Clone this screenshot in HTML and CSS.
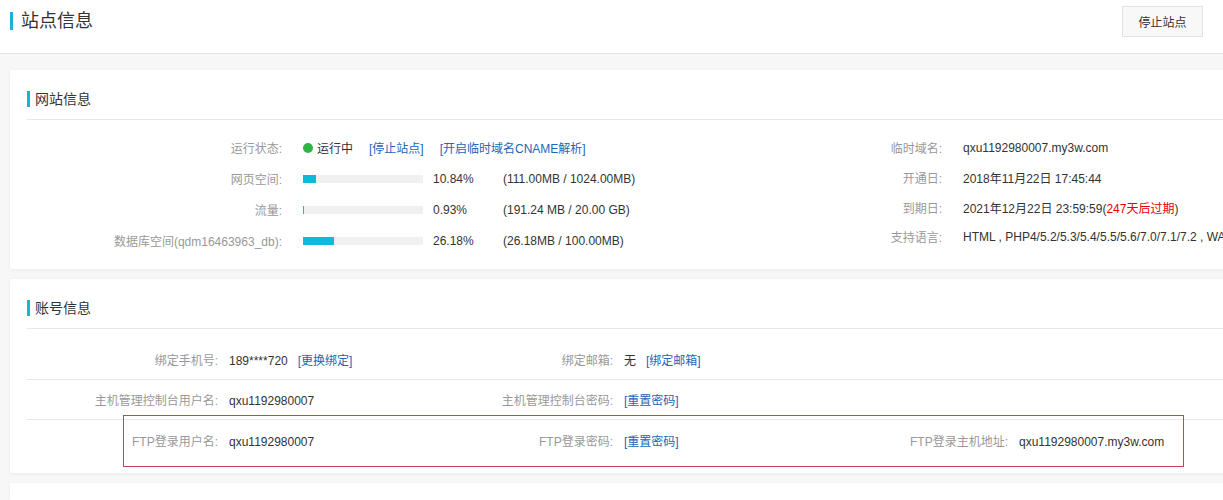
FILE: index.html
```html
<!DOCTYPE html>
<html lang="zh-CN">
<head>
  <meta charset="UTF-8" />
  <meta name="viewport" content="width=device-width, initial-scale=1.0"/>
  <title>站点信息</title>
  <link rel="stylesheet" href="styles.css">
</head>
<body>
  <div class="header">
    <h1 class="page-title">站点信息</h1>
    <button class="btn">停止站点</button>
  </div>

  <div class="content">
    <!-- 网站信息 -->
    <div class="card">
      <div class="card-title"><span>网站信息</span></div>
      <div class="site-info">
        <div class="info-left">
          <div class="row">
            <span class="label">运行状态:</span>
            <span class="value">
              <i class="dot"></i>运行中
              <a class="link gap">[停止站点]</a>
              <a class="link gap">[开启临时域名CNAME解析]</a>
            </span>
          </div>
          <div class="row">
            <span class="label">网页空间:</span>
            <span class="value">
              <span class="bar"><span class="fill" style="width: 10.84%"></span></span>
              <span class="pct">10.84%</span>
              <span>(111.00MB / 1024.00MB)</span>
            </span>
          </div>
          <div class="row">
            <span class="label">流量:</span>
            <span class="value">
              <span class="bar"><span class="fill" style="width: 0.93%"></span></span>
              <span class="pct">0.93%</span>
              <span>(191.24 MB / 20.00 GB)</span>
            </span>
          </div>
          <div class="row">
            <span class="label">数据库空间(qdm16463963_db):</span>
            <span class="value">
              <span class="bar"><span class="fill" style="width: 26.18%"></span></span>
              <span class="pct">26.18%</span>
              <span>(26.18MB / 100.00MB)</span>
            </span>
          </div>
        </div>
        <div class="info-right">
          <div class="row">
            <span class="label">临时域名:</span>
            <span class="value">qxu1192980007.my3w.com</span>
          </div>
          <div class="row">
            <span class="label">开通日:</span>
            <span class="value">2018年11月22日 17:45:44</span>
          </div>
          <div class="row">
            <span class="label">到期日:</span>
            <span class="value">2021年12月22日 23:59:59(<em class="warn">247天后过期</em>)</span>
          </div>
          <div class="row">
            <span class="label">支持语言:</span>
            <span class="value">HTML , PHP4/5.2/5.3/5.4/5.5/5.6/7.0/7.1/7.2 , WAP</span>
          </div>
        </div>
      </div>
    </div>

    <!-- 账号信息 -->
    <div class="card">
      <div class="card-title"><span>账号信息</span></div>
      <div class="account">
        <div class="acc-row">
          <div class="cell"><span class="label">绑定手机号:</span><span class="value">189****720<a class="link gap-sm">[更换绑定]</a></span></div>
          <div class="cell"><span class="label">绑定邮箱:</span><span class="value">无<a class="link gap-sm">[绑定邮箱]</a></span></div>
          <div class="cell"></div>
        </div>
        <div class="acc-row">
          <div class="cell"><span class="label">主机管理控制台用户名:</span><span class="value">qxu1192980007</span></div>
          <div class="cell"><span class="label">主机管理控制台密码:</span><span class="value"><a class="link">[重置密码]</a></span></div>
          <div class="cell"></div>
        </div>
        <div class="acc-row">
          <div class="cell"><span class="label">FTP登录用户名:</span><span class="value">qxu1192980007</span></div>
          <div class="cell"><span class="label">FTP登录密码:</span><span class="value"><a class="link">[重置密码]</a></span></div>
          <div class="cell"><span class="label">FTP登录主机地址:</span><span class="value">qxu1192980007.my3w.com</span></div>
        </div>
      </div>
      <div class="highlight"></div>
    </div>

    <div class="card empty"></div>
  </div>
</body>
</html>
```

FILE: styles.css
```css
html, body {
  margin: 0;
  overflow: hidden;
}
body {
  font-family: "Liberation Sans", "Noto Sans CJK SC", sans-serif;
  font-size: 12px;
  color: #333;
  background: #f7f7f7;
  width: 1223px;
  height: 500px;
}
.header {
  background: #fff;
  height: 41px;
  padding: 0 20px 12px 10px;
  display: flex;
  align-items: center;
  justify-content: space-between;
  border-bottom: 1px solid #e3e3e3;
}
.page-title {
  margin: 0;
  font-size: 18px;
  font-weight: normal;
  line-height: 18px;
  color: #333;
  border-left: 3px solid #1ab0d9;
  padding-left: 8px;
}
.btn {
  width: 81px;
  height: 31px;
  margin-top: 1px;
  border: 1px solid #e2e2e2;
  background: #f8f8f8;
  color: #333;
  font-family: inherit;
  font-size: 12px;
  cursor: pointer;
}
.content {
  padding: 16px 0 0 10px;
  width: 1260px;
}
.card {
  position: relative;
  background: #fff;
  padding: 0 17px 13px;
  margin-bottom: 10px;
  box-shadow: 0 1px 4px rgba(0, 0, 0, 0.06);
}
.card.empty {
  height: 4px;
  margin-bottom: 0;
}
.card-title {
  padding: 21px 0 12px;
  border-bottom: 1px solid #e8e8e8;
}
.card-title span {
  display: block;
  font-size: 14px;
  line-height: 16px;
  border-left: 3px solid #15b5d5;
  padding-left: 5px;
}
.site-info {
  display: flex;
  padding-top: 12px;
  white-space: nowrap;
}
.info-left {
  width: 815px;
}
.info-left .row {
  height: 31px;
  display: flex;
  align-items: center;
}
.info-left .label {
  width: 255px;
  text-align: right;
  color: #999;
}
.info-left .value {
  margin-left: 21px;
  display: flex;
  align-items: center;
}
.info-right .row {
  height: 29.5px;
  display: flex;
  align-items: center;
}
.info-right .row:first-child {
  height: 31px;
}
.info-right .label {
  width: 100px;
  text-align: right;
  color: #999;
}
.info-right .value {
  margin-left: 21px;
}
.dot {
  display: inline-block;
  width: 10px;
  height: 10px;
  border-radius: 50%;
  background: #2fb344;
  margin-right: 4px;
}
.link {
  color: #2266b8;
  cursor: pointer;
}
.gap {
  margin-left: 16px;
}
.gap-sm {
  margin-left: 10px;
}
.bar {
  display: inline-block;
  width: 120px;
  height: 8px;
  background: #f0f0f0;
}
.fill {
  display: block;
  height: 100%;
  min-width: 1px;
  background: #0dbbd9;
}
.pct {
  width: 70px;
  margin-left: 10px;
}
.warn {
  font-style: normal;
  color: #e60000;
}
.account {
  padding-top: 11px;
  white-space: nowrap;
}
.acc-row {
  display: grid;
  grid-template-columns: repeat(3, 395px);
  height: 39px;
  align-items: center;
  border-bottom: 1px solid #e8e8e8;
}
.acc-row:last-child {
  border-bottom: none;
  height: 40px;
}
.cell {
  display: flex;
  align-items: baseline;
}
.cell .label {
  width: 191px;
  text-align: right;
  color: #999;
}
.cell .value {
  margin-left: 11px;
}
.highlight {
  position: absolute;
  left: 113px;
  top: 136px;
  width: 1059px;
  height: 50px;
  border: 1px solid #c8414b;
}
```
